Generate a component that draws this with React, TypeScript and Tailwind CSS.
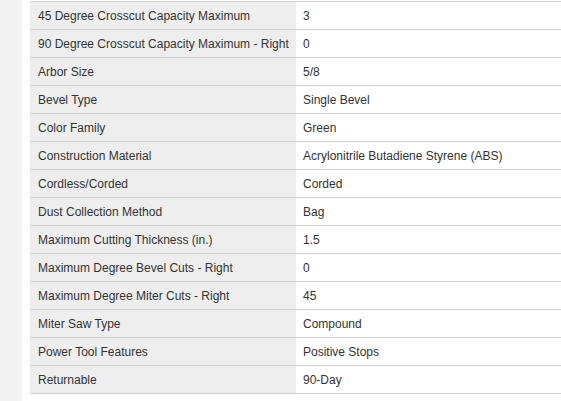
const specs: [string, string][] = [
  ['45 Degree Crosscut Capacity Maximum', '3'],
  ['90 Degree Crosscut Capacity Maximum - Right', '0'],
  ['Arbor Size', '5/8'],
  ['Bevel Type', 'Single Bevel'],
  ['Color Family', 'Green'],
  ['Construction Material', 'Acrylonitrile Butadiene Styrene (ABS)'],
  ['Cordless/Corded', 'Corded'],
  ['Dust Collection Method', 'Bag'],
  ['Maximum Cutting Thickness (in.)', '1.5'],
  ['Maximum Degree Bevel Cuts - Right', '0'],
  ['Maximum Degree Miter Cuts - Right', '45'],
  ['Miter Saw Type', 'Compound'],
  ['Power Tool Features', 'Positive Stops'],
  ['Returnable', '90-Day'],
]

export default function App() {
  return (
    <div className="flex min-h-[401px] w-[561px] bg-white font-['Liberation_Sans',Arial,sans-serif] text-[12px] text-[#333]">
      {/* page gutter */}
      <div className="w-[22px] shrink-0 bg-[#f3f3f3]" />
      <div className="w-[8px] shrink-0" />

      <div className="flex-1 pt-px">
        <div className="border-t border-[#d0d0d0]">
          {specs.map(([label, value]) => (
            <div key={label} className="flex h-[28px] border-b border-[#d0d0d0]">
              <div className="flex w-[266px] shrink-0 items-center bg-[#eeeeee] pl-[8px]">{label}</div>
              <div className="flex flex-1 items-center pl-[7px]">{value}</div>
            </div>
          ))}
        </div>
      </div>
    </div>
  )
}
